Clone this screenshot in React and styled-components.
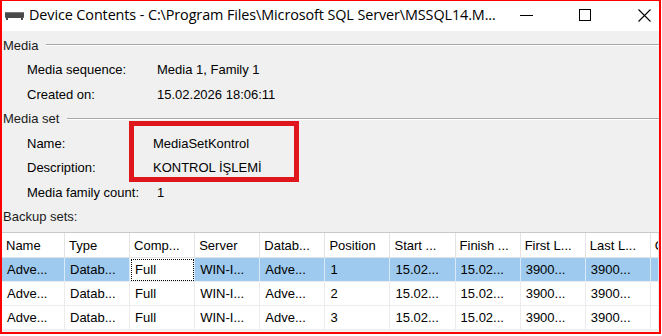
import styled, { createGlobalStyle } from "styled-components"

const GlobalStyle = createGlobalStyle`
  body {
    margin: 0;
    background: #fff;
    font-family: "Liberation Sans", Arial, sans-serif;
  }
`

const columns = ["Name", "Type", "Comp...", "Server", "Datab...", "Position", "Start ...", "Finish ...", "First L...", "Last L...", "Check..."]

const backupSets = [
  ["Adve...", "Datab...", "Full", "WIN-I...", "Adve...", "1", "15.02...", "15.02...", "3900...", "3900...", ""],
  ["Adve...", "Datab...", "Full", "WIN-I...", "Adve...", "2", "15.02...", "15.02...", "3900...", "3900...", ""],
  ["Adve...", "Datab...", "Full", "WIN-I...", "Adve...", "3", "15.02...", "15.02...", "3900...", "3900...", ""],
]

function DriveIcon() {
  return (
    <svg width="19" height="8" viewBox="0 0 19 8">
      <rect x="0" y="0" width="19" height="6" rx="1" fill="#4a4a4a" />
      <rect x="1" y="0" width="17" height="1" fill="#7a7a7a" />
      <rect x="1" y="6" width="2" height="2" fill="#4a4a4a" />
      <rect x="16" y="6" width="2" height="2" fill="#4a4a4a" />
    </svg>
  )
}

export default function App() {
  return (
    <>
      <GlobalStyle />
      <Window>
        <TitleBar>
          <TitleIcon><DriveIcon /></TitleIcon>
          <Title>Device Contents - C:\Program Files\Microsoft SQL Server\MSSQL14.M...</Title>
          <Controls>
            <svg width="13" height="13" viewBox="0 0 13 13">
              <line x1="0" y1="6.5" x2="13" y2="6.5" stroke="#000" strokeWidth="1" />
            </svg>
            <svg width="13" height="13" viewBox="0 0 13 13">
              <rect x="0.5" y="0.5" width="11" height="11" fill="none" stroke="#000" strokeWidth="1" />
            </svg>
            <svg width="13" height="13" viewBox="0 0 13 13">
              <path d="M0.5 0.5 L12.5 12.5 M12.5 0.5 L0.5 12.5" stroke="#000" strokeWidth="1.1" />
            </svg>
          </Controls>
        </TitleBar>

        <Body>
          <Section>
            <span>Media</span>
            <Rule />
          </Section>
          <Field>
            <span>Media sequence:</span>
            <span>Media 1, Family 1</span>
          </Field>
          <Field>
            <span>Created on:</span>
            <span>15.02.2026 18:06:11</span>
          </Field>
          <Section>
            <span>Media set</span>
            <Rule />
          </Section>
          <Field>
            <span>Name:</span>
            <Value $shift={-4}>MediaSetKontrol</Value>
          </Field>
          <Field>
            <span>Description:</span>
            <Value $shift={-4}>KONTROL İŞLEMİ</Value>
          </Field>
          <Field>
            <span>Media family count:</span>
            <span>1</span>
          </Field>
          <Section>
            <span>Backup sets:</span>
          </Section>

          <Grid>
            {columns.map((c) => (
              <HeaderCell key={c}>{c}</HeaderCell>
            ))}
            {backupSets.map((row, r) =>
              row.map((v, i) => (
                <Cell key={r + "-" + i} $selected={r === 0} $focused={r === 0 && i === 2}>
                  {v}
                </Cell>
              ))
            )}
          </Grid>

          <Highlight />
        </Body>
      </Window>
    </>
  )
}

const Window = styled.div`
  box-sizing: border-box;
  width: 661px;
  height: 334px;
  border: 2px solid #ff0000;
  border-top-width: 1px;
  background: #f0f0f0;
  display: flex;
  flex-direction: column;
  overflow: hidden;
`
const TitleBar = styled.div`
  height: 30px;
  background: #fff;
  display: flex;
  align-items: center;
  padding-left: 3px;
  padding-bottom: 3px;
  box-sizing: border-box;
`
const TitleIcon = styled.div`
  display: flex;
  width: 24px;
  margin-top: 2px;
`
const Title = styled.div`
  flex: 1;
  font-family: "Open Sans", "Noto Sans", sans-serif;
  font-size: 14.4px;
  color: #000;
  white-space: nowrap;
  letter-spacing: -0.1px;
`
const Controls = styled.div`
  display: flex;
  align-items: center;
  gap: 46px;
  padding-right: 8px;
  margin-top: 1px;
`
const Body = styled.div`
  position: relative;
  flex: 1;
  display: flex;
  flex-direction: column;
  padding-top: 2px;
  font-size: 13px;
  color: #000;
`
const Section = styled.div`
  height: 24.5px;
  display: flex;
  align-items: center;
  gap: 8px;
  padding-left: 1px;
  color: #1b1b1b;
`
const Rule = styled.div`
  flex: 1;
  height: 0;
  border-top: 1px solid #a8a8a8;
  border-bottom: 1px solid #fff;
`
const Field = styled.div`
  height: 24.5px;
  display: grid;
  grid-template-columns: 130px 1fr;
  align-items: center;
  padding-left: 25px;
`
const Value = styled.span`
  margin-left: ${(p) => p.$shift || 0}px;
`
const Grid = styled.div`
  margin-top: 3px;
  flex: 1;
  display: grid;
  grid-template-columns: 63px repeat(9, 65.1px) 1fr;
  grid-auto-rows: 24px;
  grid-template-rows: 25px;
  align-content: start;
  background: #f0f0f0;
  border-top: 1px solid #c8c8c8;
`
const HeaderCell = styled.div`
  background: #fff;
  border-right: 1px solid #e3e3e3;
  border-bottom: 1px solid #e3e3e3;
  padding-left: 4px;
  display: flex;
  align-items: center;
  white-space: nowrap;
  overflow: hidden;
`
const Cell = styled.div`
  position: relative;
  background: ${(p) => (p.$selected ? "#9dcaee" : "#fff")};
  border-right: 1px solid ${(p) => (p.$selected ? "#d8e9f7" : "#ececec")};
  border-bottom: 1px solid #ececec;
  padding-left: 5px;
  display: flex;
  align-items: center;
  white-space: nowrap;
  overflow: hidden;
  ${(p) =>
    p.$focused &&
    `
    background: #fff;
    outline: 1px dotted #000;
    outline-offset: -2px;
  `}
`
const Highlight = styled.div`
  position: absolute;
  left: 127px;
  top: 90px;
  width: 170px;
  height: 61px;
  box-sizing: border-box;
  border: 5px solid #e0161d;
  pointer-events: none;
`
